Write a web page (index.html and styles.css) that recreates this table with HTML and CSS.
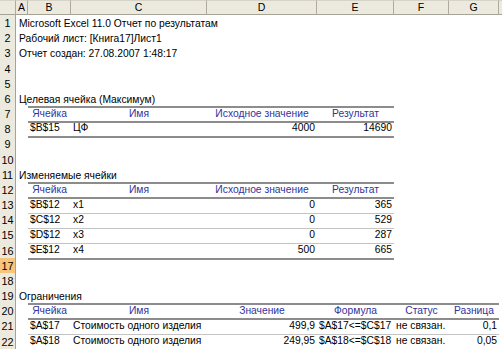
FILE: index.html
```html
<!DOCTYPE html>
<html lang="ru">
<head>
<meta charset="utf-8">
<title>Отчет по результатам</title>
<link rel="stylesheet" href="styles.css">
</head>
<body>
<div class="sheet">
  <div class="hdr">
    <div class="corner"></div>
    <div class="ch">A</div>
    <div class="ch">B</div>
    <div class="ch">C</div>
    <div class="ch">D</div>
    <div class="ch">E</div>
    <div class="ch">F</div>
    <div class="ch">G</div>
    <div class="ch rest"></div>
  </div>

  <div class="row"><div class="rn">1</div><div class="c a">Microsoft Excel 11.0 Отчет по результатам</div></div>
  <div class="row"><div class="rn">2</div><div class="c a">Рабочий лист: [Книга17]Лист1</div></div>
  <div class="row"><div class="rn">3</div><div class="c a">Отчет создан: 27.08.2007 1:48:17</div></div>
  <div class="row"><div class="rn">4</div></div>
  <div class="row"><div class="rn">5</div></div>
  <div class="row"><div class="rn">6</div><div class="c a">Целевая ячейка (Максимум)</div></div>
  <div class="row"><div class="rn">7</div>
    <div class="c b th">Ячейка</div><div class="c th">Имя</div><div class="c th">Исходное значение</div><div class="c th">Результат</div>
  </div>
  <div class="row"><div class="rn">8</div>
    <div class="c b td last">$B$15</div><div class="c td last">ЦФ</div><div class="c td last num">4000</div><div class="c td last num">14690</div>
  </div>
  <div class="row"><div class="rn">9</div></div>
  <div class="row"><div class="rn">10</div></div>
  <div class="row"><div class="rn">11</div><div class="c a">Изменяемые ячейки</div></div>
  <div class="row"><div class="rn">12</div>
    <div class="c b th">Ячейка</div><div class="c th">Имя</div><div class="c th">Исходное значение</div><div class="c th">Результат</div>
  </div>
  <div class="row"><div class="rn">13</div>
    <div class="c b td">$B$12</div><div class="c td">x1</div><div class="c td num">0</div><div class="c td num">365</div>
  </div>
  <div class="row"><div class="rn">14</div>
    <div class="c b td">$C$12</div><div class="c td">x2</div><div class="c td num">0</div><div class="c td num">529</div>
  </div>
  <div class="row"><div class="rn">15</div>
    <div class="c b td">$D$12</div><div class="c td">x3</div><div class="c td num">0</div><div class="c td num">287</div>
  </div>
  <div class="row"><div class="rn">16</div>
    <div class="c b td last">$E$12</div><div class="c td last">x4</div><div class="c td last num">500</div><div class="c td last num">665</div>
  </div>
  <div class="row"><div class="rn active">17</div></div>
  <div class="row"><div class="rn">18</div></div>
  <div class="row"><div class="rn">19</div><div class="c a">Ограничения</div></div>
  <div class="row"><div class="rn">20</div>
    <div class="c b th">Ячейка</div><div class="c th">Имя</div><div class="c th">Значение</div><div class="c th">Формула</div><div class="c th">Статус</div><div class="c th">Разница</div>
  </div>
  <div class="row"><div class="rn">21</div>
    <div class="c b td">$A$17</div><div class="c td">Стоимость одного изделия</div><div class="c td num">499,9</div><div class="c td">$A$17&lt;=$C$17</div><div class="c td">не связан.</div><div class="c td num">0,1</div>
  </div>
  <div class="row"><div class="rn">22</div>
    <div class="c b td last">$A$18</div><div class="c td last">Стоимость одного изделия</div><div class="c td last num">249,95</div><div class="c td last">$A$18&lt;=$C$18</div><div class="c td last">не связан.</div><div class="c td last num">0,05</div>
  </div>
</div>
</body>
</html>
```

FILE: styles.css
```css
html, body {
  margin: 0;
  padding: 0;
  background: #ffffff;
}

.sheet {
  width: 502px;
  height: 349px;
  overflow: hidden;
  font-family: "Liberation Sans", Arial, sans-serif;
  font-size: 10.3px;
  color: #000000;
}

/* shared column track: row header, A..G, remainder */
.hdr,
.row {
  display: grid;
  grid-template-columns: 16px 12px 43px 136px 110px 77px 55px 50px 1fr;
}

/* column letters */
.hdr {
  height: 15px;
}

.corner,
.ch {
  box-sizing: border-box;
  background: #eceade;
  border-bottom: 1px solid #a6a394;
  border-right: 1px solid #aeab9c;
  border-top: 1px solid #d6d4c8;
}

.ch {
  font-size: 10.5px;
  line-height: 13px;
  text-align: center;
}

.ch.rest {
  border-right: none;
}

/* sheet rows */
.row {
  height: 15.18px;
}

.rn {
  box-sizing: border-box;
  grid-column: 1;
  background: #eceade;
  border-right: 1px solid #a6a394;
  border-bottom: 1px solid #c9c6b8;
  text-align: center;
  font-size: 10.8px;
  line-height: 16px;
}

.rn.active {
  background: #f8c57c;
  border-bottom-color: #d49a4a;
}

.c {
  box-sizing: border-box;
  min-width: 0;
  padding: 0 2px;
  white-space: nowrap;
  overflow: visible;
  line-height: 15px;
}

.c.a {
  grid-column: 2;
  padding-left: 3px;
  line-height: 17px;
}

.c.b {
  grid-column: 3;
}

/* report tables */
.th {
  color: #32329a;
  text-align: center;
  border-top: 2px solid #8c8c8c;
  border-bottom: 2px solid #8c8c8c;
  line-height: 12px;
}

.td {
  border-bottom: 1px solid #c4c4c4;
  line-height: 15px;
}

.td.last {
  border-bottom: 2px solid #8c8c8c;
  line-height: 14px;
}

.num {
  text-align: right;
}
```
